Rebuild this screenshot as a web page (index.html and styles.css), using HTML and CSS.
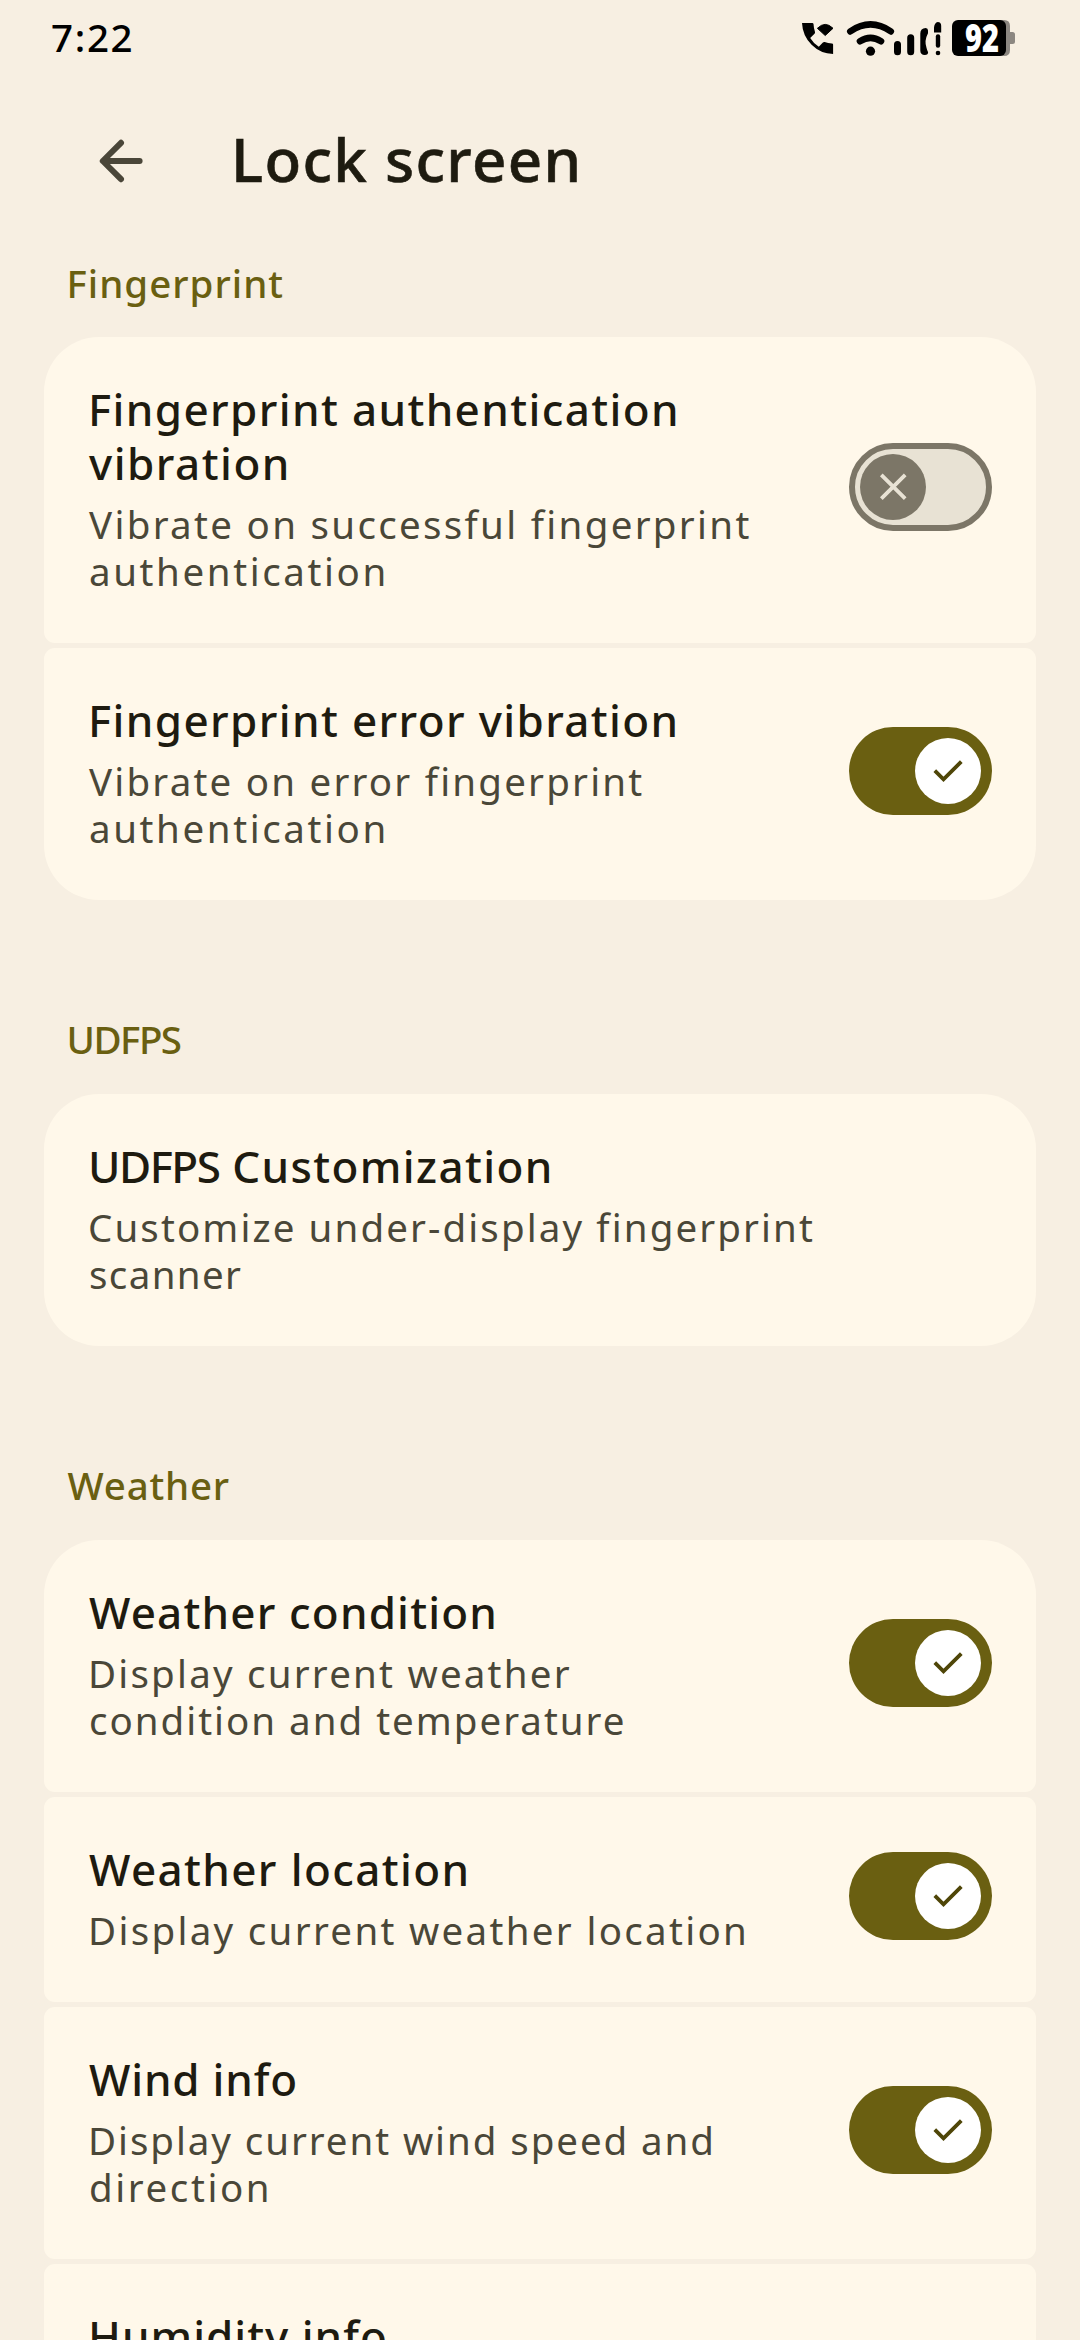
FILE: index.html
```html
<!DOCTYPE html>
<html lang="en">
<head>
<meta charset="utf-8">
<title>Lock screen</title>
<link rel="stylesheet" href="styles.css">
</head>
<body>
<svg class="defs" width="0" height="0" aria-hidden="true">
  <symbol id="check" viewBox="0 0 66 66"><path d="M19.8 32.7 L28.5 41.3 L46.3 23.6" fill="none" stroke="#4f4608" stroke-width="3.8"/></symbol>
  <symbol id="cross" viewBox="0 0 66 66"><path d="M21.3 20.8 L45.200 44.7 M45.200 20.8 L21.3 44.7" fill="none" stroke="#e8e2d4" stroke-width="3.8"/></symbol>
</svg>
<div class="screen">
  <header class="status">
    <span class="time">7:22</span>
    <svg class="status-icons" width="240" height="44" viewBox="800 16 240 44">
      <path d="M802 23 h10.3 q1 0 1.2 1 q.3 4.500 1.500 8 q.2 1 -.5 1.800 l-4.300 4.200 q3.300 5.500 8.600 8.700 l4.100 -4.200 q.8 -.8 1.800 -.5 q3.300 1.200 7.200 1.400 q1.200 .1 1.200 1.200 V54 q-12.500 -.2 -21.500 -9.200 T802 23 Z"/>
      <path d="M817.400 28.300 Q825.300 20.500 833 28.300 L825.200 35.500 Z" stroke="#000" stroke-width="1" stroke-linejoin="round"/>
      <g fill="none" stroke="#000" stroke-width="6.600" stroke-linecap="round">
        <path d="M850.300 31.400 Q870.500 17.500 890.800 31.400"/>
        <path d="M860 41.300 Q870.500 34.600 881 41.300"/>
        <path d="M897.500 44.500 V51.800 M910.700 37.800 V51.800" stroke-width="7"/>
      </g>
      <circle cx="870.500" cy="51.200" r="4.600"/>
      <path d="M920.300 33.500 q0 -5.300 5.500 -5.500 q2.200 .2 2.200 2.600 v2.600 q-4 7.500 -1.500 14.500 q.3 1.700 1.600 4.500 q.2 2.500 -3.300 2.900 q-4.500 -.2 -4.500 -4.500 Z"/>
      <path d="M934 32.500 v-5 q.6 -5 3.700 -5.500 q3.500 .2 3.500 4 v6.500 Z"/>
      <path d="M938 36.500 V45.500" fill="none" stroke="#000" stroke-width="4.400" stroke-linecap="round"/>
      <circle cx="938" cy="53" r="2.300"/>
      <path d="M1000 20 h4 q6 0 6 6 v6 h2.500 q2.500 0 2.500 2.500 v7 q0 2.500 -2.500 2.500 h-2.500 v6 q0 6 -6 6 h-4 Z" fill="#8c8781"/>
      <rect x="952" y="20" width="54" height="36" rx="6"/>
      <text class="battery-level" x="965" y="51.500" textLength="34" lengthAdjust="spacingAndGlyphs">92</text>
    </svg>
  </header>

  <div class="toolbar">
    <svg class="back" width="50" height="50" viewBox="96 136 50 50"><path d="M139.600 161 H103 M121 142.800 L102.800 161 L121 179.200" fill="none" stroke="#4a4639" stroke-width="6" stroke-linecap="round" stroke-linejoin="round"/></svg>
    <h1 class="heading">Lock screen</h1>
  </div>

  <main>
    <section class="group">
      <h2 class="label label-first stem ls-10">Fingerprint</h2>
      <div class="cards">
        <div class="card">
          <div class="text">
            <div class="title title-two"><span class="line stem ls-14">Fingerprint authentication</span><span class="line ls-15">vibration</span></div>
            <div class="sub"><span class="line ls-23">Vibrate on successful fingerprint</span><span class="line ls-26">authentication</span></div>
          </div>
          <div class="switch off"><svg class="thumb"><use href="#cross"/></svg></div>
        </div>
        <div class="card">
          <div class="text">
            <div class="title"><span class="line stem ls-14">Fingerprint error vibration</span></div>
            <div class="sub"><span class="line ls-22">Vibrate on error fingerprint</span><span class="line ls-26">authentication</span></div>
          </div>
          <div class="switch"><svg class="thumb"><use href="#check"/></svg></div>
        </div>
      </div>
    </section>

    <section class="group">
      <h2 class="label stem ls-tight">UDFPS</h2>
      <div class="cards">
        <div class="card">
          <div class="text">
            <div class="title"><span class="line stem"><span class="ls-tight">UDFPS</span><span class="ls-14"> Customization</span></span></div>
            <div class="sub"><span class="line stem ls-21">Customize under-display fingerprint</span><span class="line ls-14">scanner</span></div>
          </div>
        </div>
      </div>
    </section>

    <section class="group">
      <h2 class="label ls-8">Weather</h2>
      <div class="cards">
        <div class="card">
          <div class="text">
            <div class="title"><span class="line ls-12">Weather condition</span></div>
            <div class="sub"><span class="line stem ls-22">Display current weather</span><span class="line ls-20">condition and temperature</span></div>
          </div>
          <div class="switch"><svg class="thumb"><use href="#check"/></svg></div>
        </div>
        <div class="card">
          <div class="text">
            <div class="title"><span class="line ls-14">Weather location</span></div>
            <div class="sub"><span class="line stem ls-23">Display current weather location</span></div>
          </div>
          <div class="switch"><svg class="thumb"><use href="#check"/></svg></div>
        </div>
        <div class="card">
          <div class="text">
            <div class="title"><span class="line ls-8">Wind info</span></div>
            <div class="sub"><span class="line stem ls-19">Display current wind speed and</span><span class="line ls-26">direction</span></div>
          </div>
          <div class="switch"><svg class="thumb"><use href="#check"/></svg></div>
        </div>
        <div class="card">
          <div class="text">
            <div class="title"><span class="line stem ls-10">Humidity info</span></div>
          </div>
        </div>
      </div>
    </section>
  </main>
</div>
</body>
</html>
```

FILE: styles.css
```css
* { box-sizing: border-box; }

body {
  margin: 0;
  background: #f7efe2;
  font-family: "Noto Sans", sans-serif;
  color: #1e1b10;
}

.defs { display: block; }

.screen {
  width: 1080px;
  height: 2340px;
  overflow: hidden;
}

.status {
  display: flex;
  justify-content: space-between;
  align-items: flex-start;
  height: 80px;
  padding: 14px 40px 0 51px;
}

.time {
  font-size: 38.5px;
  font-weight: 500;
  line-height: 47px;
  letter-spacing: 1.7px;
  color: #000;
}

.status-icons { margin-top: 2px; }

.battery-level {
  font-family: "Open Sans", sans-serif;
  font-weight: 800;
  font-size: 38px;
  fill: #fff;
}

.toolbar {
  display: flex;
  align-items: center;
  gap: 85px;
  height: 160px;
  padding: 2px 0 0 96px;
}

.back { flex: none; }

.heading {
  margin: 0;
  padding-bottom: 4px;
  font-size: 60px;
  font-weight: 500;
  line-height: 80px;
  letter-spacing: 1.35px;
  -webkit-text-stroke: 0.6px currentColor;
}

.label {
  margin: 0;
  padding: 115.5px 0 31.5px 67.5px;
  font-size: 38.5px;
  font-weight: 500;
  line-height: 47px;
  color: #6a5f11;
}

.label-first { padding-top: 19.5px; padding-bottom: 30.5px; }

.cards {
  display: flex;
  flex-direction: column;
  gap: 5px;
  margin: 0 44px;
}

.card {
  display: flex;
  align-items: center;
  justify-content: space-between;
  padding: 46px 44px 48px 45px;
  background: #fff8ea;
  border-radius: 11px;
}

.card:first-child { border-top-left-radius: 55px; border-top-right-radius: 55px; }
.group:not(:last-child) .card:last-child { border-bottom-left-radius: 55px; border-bottom-right-radius: 55px; }

.text { display: flex; flex-direction: column; gap: 11px; }

.title { font-size: 44px; font-weight: 500; line-height: 53px; }
.title-two { line-height: 53.5px; }

.sub { font-size: 38.5px; line-height: 47px; color: #4a4738; }

.line { display: block; white-space: nowrap; }
.stem { text-indent: -1px; }

.ls-tight { letter-spacing: -1.5px; }
.ls-8 { letter-spacing: 0.8px; }
.ls-10 { letter-spacing: 1px; }
.ls-12 { letter-spacing: 1.17px; }
.ls-14 { letter-spacing: 1.37px; }
.ls-15 { letter-spacing: 1.49px; }
.ls-19 { letter-spacing: 1.93px; }
.ls-20 { letter-spacing: 2px; }
.ls-21 { letter-spacing: 2.11px; }
.ls-22 { letter-spacing: 2.21px; }
.ls-23 { letter-spacing: 2.31px; }
.ls-26 { letter-spacing: 2.6px; }

.switch {
  display: flex;
  flex: none;
  align-items: center;
  justify-content: flex-end;
  width: 143px;
  height: 88px;
  margin-bottom: 5px;
  padding: 0 11px;
  border-radius: 44px;
  background: #6a5f11;
}

.thumb {
  width: 66px;
  height: 66px;
  border-radius: 50%;
  background: #fff;
}

.switch.off {
  justify-content: flex-start;
  margin-bottom: 4px;
  padding: 0 5px;
  border: 6px solid #7c7667;
  background: #e8e2d4;
}

.switch.off .thumb { background: #7c7667; }
```
